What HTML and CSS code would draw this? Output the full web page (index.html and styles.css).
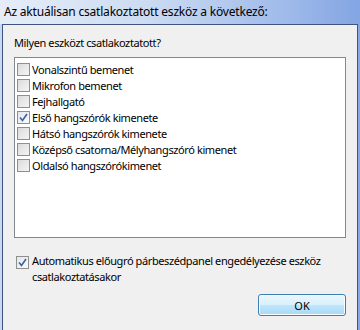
FILE: index.html
```html
<!DOCTYPE html>
<html lang="hu">
<head>
  <meta charset="UTF-8" />
  <title>Eszköz csatlakoztatva</title>
  <link rel="stylesheet" href="styles.css">
</head>
<body>

<div class="window">
  <div class="titlebar">Az aktuálisan csatlakoztatott eszköz a következő:</div>

  <div class="panel">
    <p class="prompt">Milyen eszközt csatlakoztatott?</p>

    <div class="listbox">
      <label class="item"><span class="box"></span>Vonalszintű bemenet</label>
      <label class="item"><span class="box"></span>Mikrofon bemenet</label>
      <label class="item"><span class="box"></span>Fejhallgató</label>
      <label class="item"><span class="box checked"><svg viewBox="0 0 9 9" width="9" height="9"><path d="M1 4.5 L3.5 7.5 L8 1" fill="none" stroke="#3b5fa8" stroke-width="1.6"/></svg></span>Első hangszórók kimenete</label>
      <label class="item"><span class="box"></span>Hátsó hangszórók kimenete</label>
      <label class="item"><span class="box"></span>Középső csatorna/Mélyhangszóró kimenet</label>
      <label class="item"><span class="box"></span>Oldalsó hangszórókimenet</label>
    </div>

    <label class="auto">
      <span class="box checked"><svg viewBox="0 0 9 9" width="9" height="9"><path d="M1 4.5 L3.5 7.5 L8 1" fill="none" stroke="#3b5fa8" stroke-width="1.6"/></svg></span>
      <span>Automatikus előugró párbeszédpanel engedélyezése eszköz csatlakoztatásakor</span>
    </label>

    <div class="actions">
      <button class="ok">OK</button>
    </div>
  </div>
</div>

</body>
</html>
```

FILE: styles.css
```css
body {
  margin: 0;
  font-family: "Noto Sans", "DejaVu Sans", sans-serif;
  font-size: 11px;
  letter-spacing: -0.4px;
  color: #000;
}
.window {
  width: 360px;
  height: 330px;
  display: flex;
  flex-direction: column;
  background: linear-gradient(to right, #c9d9f1, #a9c1ea 45%, #87a7e2);
}
.titlebar {
  flex: none;
  height: 24px;
  line-height: 24px;
  padding-left: 4px;
  font-size: 12px;
  letter-spacing: -0.2px;
  background: linear-gradient(to right, #e6edf8, #cddcf2 40%, #9fbaea 80%, #84a5e3);
  white-space: nowrap;
}
.panel {
  flex: 1;
  margin: 0 2px 0 2px;
  border: 1px solid #3f5580;
  border-bottom: none;
  background: #f0f0f0;
  padding: 0 11px 0 11px;
  display: flex;
  flex-direction: column;
}
.prompt {
  margin: 10px 0 0 0;
  line-height: 16px;
}
.listbox {
  flex: none;
  box-sizing: border-box;
  margin-top: 6px;
  height: 181px;
  border: 1px solid #828790;
  background: #fff;
  padding: 3px 0 0 2px;
}
.item {
  display: flex;
  align-items: center;
  height: 16px;
  white-space: nowrap;
}
.box {
  width: 11px;
  height: 11px;
  border: 1px solid #8e8f8f;
  background: linear-gradient(135deg, #dcdcdc, #f4f4f4);
  margin-right: 2px;
  flex: none;
  display: flex;
  align-items: center;
  justify-content: center;
}
.box.checked {
  background: linear-gradient(135deg, #e4e6ea, #fafafa);
}
.auto {
  flex: none;
  display: flex;
  align-items: flex-start;
  margin-top: 15px;
  padding-left: 2px;
  line-height: 16px;
}
.auto .box {
  margin-top: 3px;
  margin-right: 3px;
}
.actions {
  flex: none;
  display: flex;
  justify-content: flex-end;
  margin-top: 9px;
}
.ok {
  width: 88px;
  height: 22px;
  font-family: inherit;
  font-size: 11px;
  border: 1px solid #3c7fb1;
  border-radius: 3px;
  background: linear-gradient(#eaf6fd, #d9f0fc 50%, #bee6fd 51%, #a7d9f5);
  box-shadow: inset 0 0 0 1px #fbfdff;
}
```
